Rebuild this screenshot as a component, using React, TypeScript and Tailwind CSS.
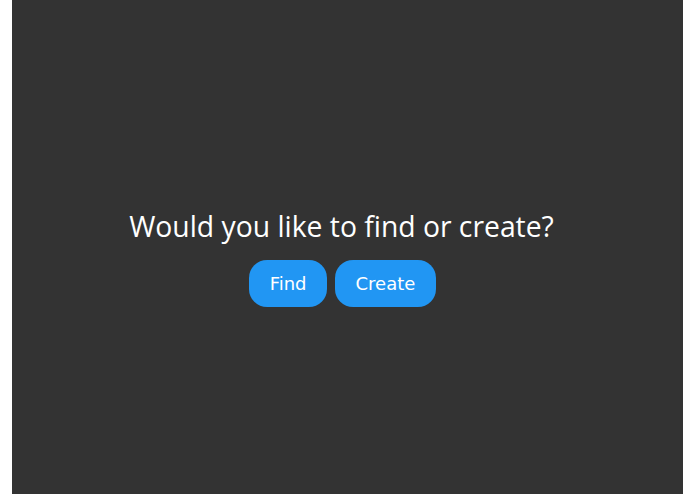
export default function App() {
  return (
    <div className="flex h-screen w-full bg-white px-[12px]">
      <div className="flex flex-1 flex-col items-center justify-center bg-[#333333] pt-[20px] pr-[10px]">
        <h1 className="text-[28.3px] leading-[38px] text-white font-['Open_Sans',sans-serif] pr-[2px]">
          Would you like to find or create?
        </h1>
        <div className="mt-[15px] flex gap-[8px]">
          <button className="h-[47px] rounded-[18px] bg-[#2196f3] px-[20.5px] text-[18px] text-white font-['DejaVu_Sans',sans-serif]">
            Find
          </button>
          <button className="h-[47px] rounded-[18px] bg-[#2196f3] px-[20.5px] text-[18px] text-white font-['DejaVu_Sans',sans-serif]">
            Create
          </button>
        </div>
      </div>
    </div>
  )
}
